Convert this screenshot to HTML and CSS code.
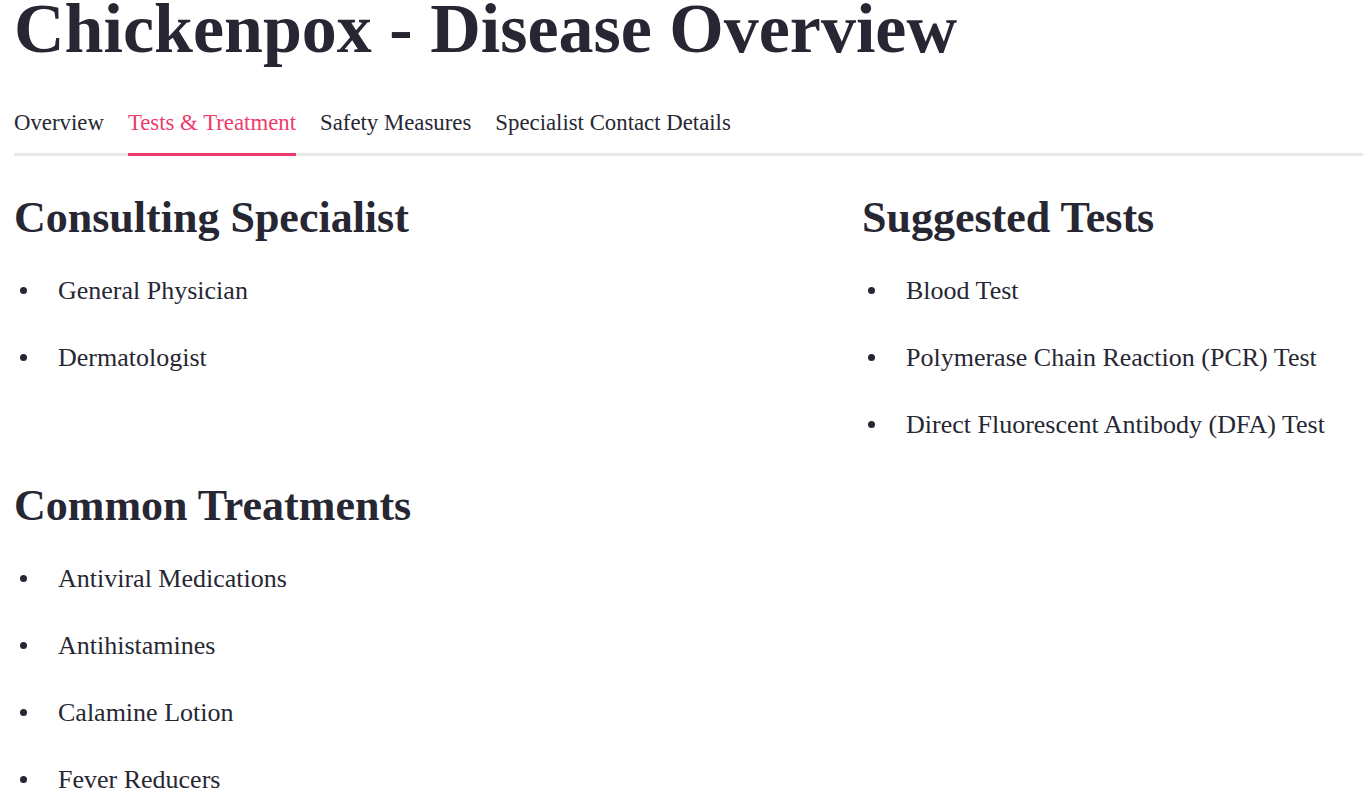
FILE: index.html
```html
<!DOCTYPE html>
<html lang="en">
<head>
<meta charset="utf-8">
<title>Chickenpox - Disease Overview</title>
<link rel="stylesheet" href="styles.css">
</head>
<body>
<main class="page">
  <h1 class="title">Chickenpox - Disease Overview</h1>
  <nav class="tabs">
    <a class="tab">Overview</a>
    <a class="tab tab-active">Tests &amp; Treatment</a>
    <a class="tab">Safety Measures</a>
    <a class="tab">Specialist Contact Details</a>
  </nav>
  <div class="grid">
    <section class="block">
      <h2 class="block-title">Consulting Specialist</h2>
      <ul class="list">
        <li class="item">General Physician</li>
        <li class="item">Dermatologist</li>
      </ul>
    </section>
    <section class="block">
      <h2 class="block-title">Suggested Tests</h2>
      <ul class="list">
        <li class="item">Blood Test</li>
        <li class="item">Polymerase Chain Reaction (PCR) Test</li>
        <li class="item">Direct Fluorescent Antibody (DFA) Test</li>
      </ul>
    </section>
    <section class="block">
      <h2 class="block-title">Common Treatments</h2>
      <ul class="list">
        <li class="item">Antiviral Medications</li>
        <li class="item">Antihistamines</li>
        <li class="item">Calamine Lotion</li>
        <li class="item">Fever Reducers</li>
      </ul>
    </section>
  </div>
</main>
</body>
</html>
```

FILE: styles.css
```css
html, body {
  margin: 0;
  padding: 0;
  background: #ffffff;
}

body {
  font-family: "Liberation Serif", "Times New Roman", serif;
  color: #272733;
  overflow: hidden;
}

.page {
  padding: 0 0 0 14px;
}

.title {
  margin: 0;
  font-size: 70px;
  line-height: 58px;
  font-weight: 700;
  letter-spacing: 0;
}

.tabs {
  display: flex;
  gap: 24px;
  margin-top: 49px;
  border-bottom: 3px solid #e8e8e8;
}

.tab {
  display: block;
  font-size: 22.8px;
  line-height: 30px;
  padding-top: 1px;
  padding-bottom: 15px;
  margin-bottom: -3px;
  border-bottom: 3px solid transparent;
  color: #272733;
  cursor: pointer;
}

.tab-active {
  color: #ef3b6b;
  border-bottom-color: #ef3b6b;
}

.grid {
  display: grid;
  grid-template-columns: 848px 1fr;
  row-gap: 35px;
  margin-top: 35px;
}

.block-title {
  margin: 0;
  font-size: 44px;
  line-height: 53px;
  font-weight: 700;
}

.list {
  list-style: none;
  margin: 27px 0 0 0;
  padding: 0;
  display: flex;
  flex-direction: column;
  gap: 28px;
}

.item {
  display: flex;
  align-items: center;
  font-size: 26px;
  line-height: 39px;
}

.item::before {
  content: "";
  flex: none;
  width: 7px;
  height: 7px;
  border-radius: 50%;
  background: #272733;
  margin-left: 6px;
  margin-right: 31px;
}
```
